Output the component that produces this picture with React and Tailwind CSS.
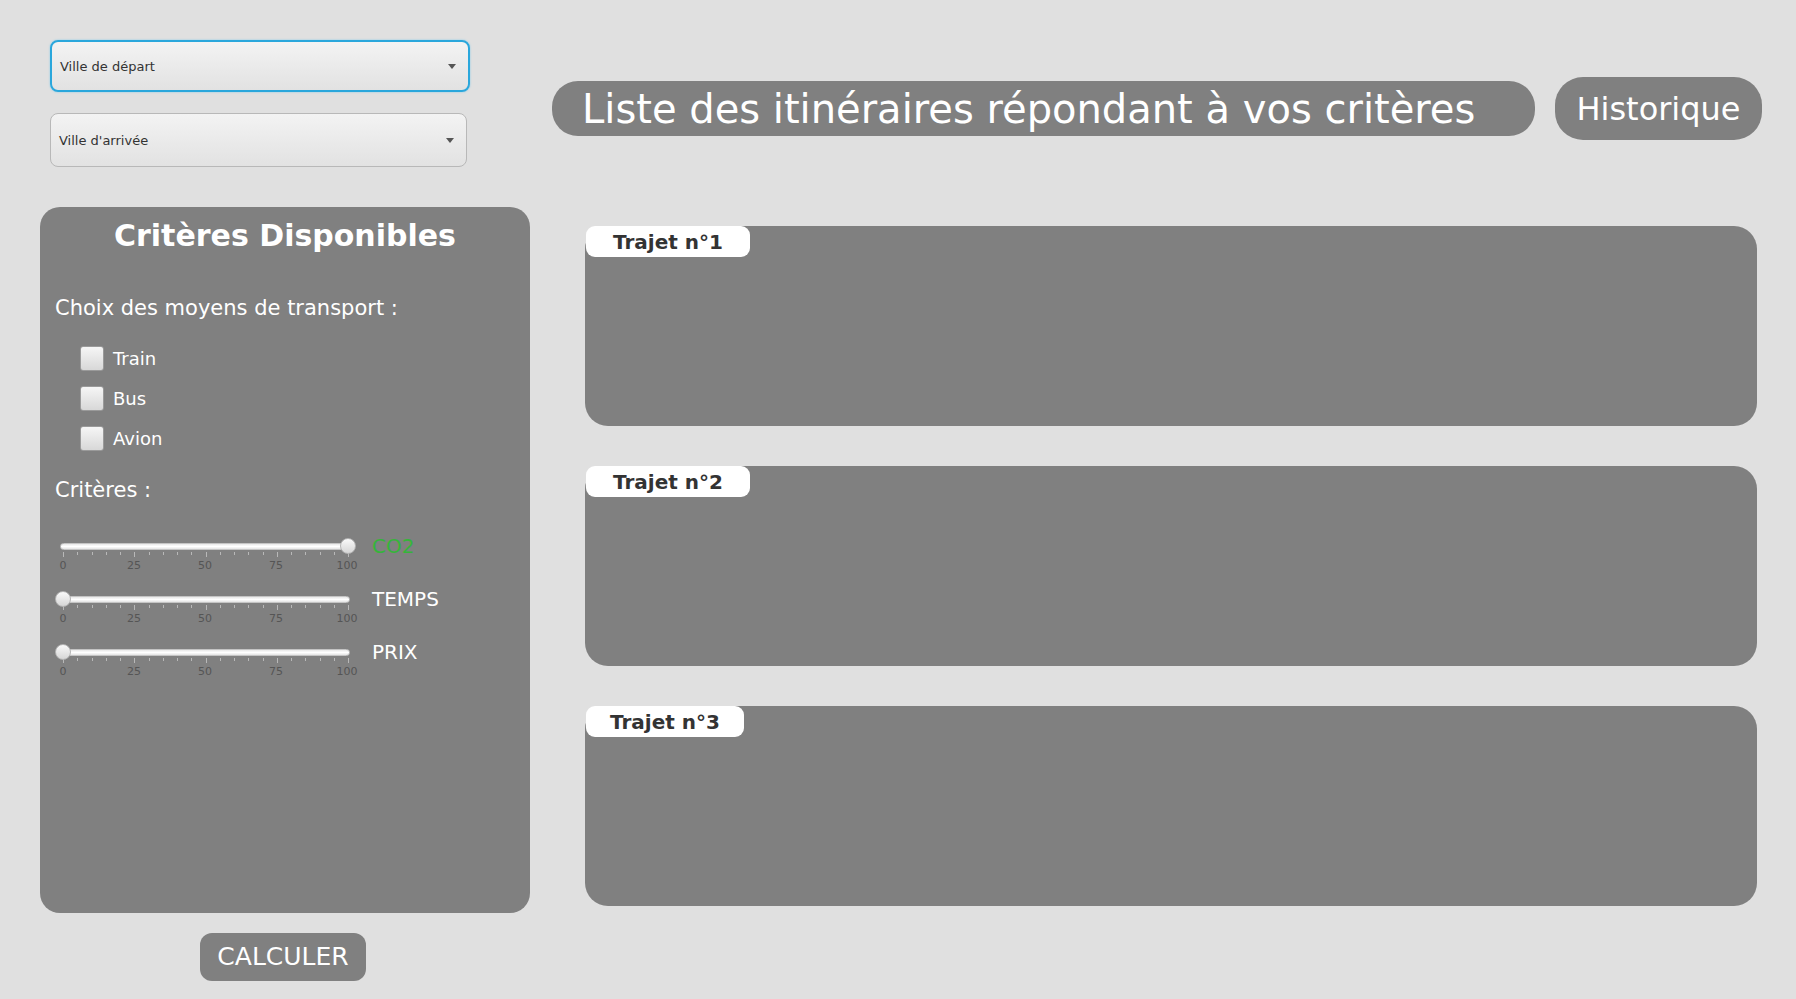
import React, { useState } from "react";

const font = { fontFamily: '"DejaVu Sans", "Liberation Sans", sans-serif' };

function Combo({ label, focused }) {
  return (
    <div
      className={
        "flex items-center justify-between pl-[8px] pr-[12px] pt-[1px] rounded-[8px] bg-gradient-to-b from-[#f3f3f3] to-[#e2e2e2] " +
        (focused
          ? "border-[2px] border-[#2aa7dc] shadow-[0_0_2px_#7cc8ea]"
          : "border border-[#b8b8b8]")
      }
      style={{ height: "100%" }}
    >
      <span className="text-[13px] text-[#333]">{label}</span>
      <span className="w-0 h-0 border-l-[4px] border-r-[4px] border-t-[5px] border-l-transparent border-r-transparent border-t-[#555]" />
    </div>
  );
}

function Check({ label }) {
  const [on, setOn] = useState(false);
  return (
    <div className="h-[40px] flex items-center pl-[25px] gap-[9px]" onClick={() => setOn(!on)}>
      <div className="w-[24px] h-[25px] rounded-[3px] border border-[#9a9a9a] bg-gradient-to-b from-[#f6f6f6] to-[#d8d8d8] flex items-center justify-center text-[#333] text-[16px]">
        {on ? "✓" : ""}
      </div>
      <span className="text-[18px] text-white">{label}</span>
    </div>
  );
}

function Slider({ value, label, green }) {
  const ticks = Array.from({ length: 21 }, (_, i) => i);
  return (
    <div className="h-[53px] flex items-start">
      <div className="relative w-[290px] ml-[5px]">
        <div className="mt-[7px] h-[7px] rounded-full border border-[#c4c4c4] bg-gradient-to-b from-[#e8e8e8] via-white to-[#e4e4e4]" />
        <div
          className="absolute top-[2px] w-[16px] h-[16px] rounded-full border border-[#b4b4b4] bg-gradient-to-b from-[#fafafa] to-[#d6d6d6]"
          style={{ left: 3 + (value / 100) * 285 - 8 }}
        />
        <div className="mt-[2px] ml-[3px] w-[286px] flex justify-between items-start">
          {ticks.map((t) => (
            <div key={t} className={"w-px bg-[#b8b8b8] " + (t % 5 === 0 ? "h-[5px]" : "h-[3px]")} />
          ))}
        </div>
        <div className="ml-[-9px] w-[308px] flex justify-between mt-[2px]">
          {["0", "25", "50", "75", "100"].map((n) => (
            <span key={n} className="w-[24px] text-center text-[11px] leading-[13px] text-[#555]">
              {n}
            </span>
          ))}
        </div>
      </div>
      <span className={"ml-[22px] h-[20px] leading-[20px] text-[20px] " + (green ? "text-[#35b53a]" : "text-white")}>
        {label}
      </span>
    </div>
  );
}

function Card({ n, tabW }) {
  return (
    <div className="w-[1172px] h-[200px] rounded-[23px] bg-[#808080] ml-[33px]">
      <div
        className="h-[31px] bg-white rounded-[9px] ml-[1px] flex items-center justify-center text-[20px] font-bold text-[#333]"
        style={{ width: tabW }}
      >
        Trajet n°{n}
      </div>
    </div>
  );
}

export default function App() {
  return (
    <div className="w-full h-screen bg-[#e0e0e0] flex overflow-hidden" style={font}>
      <div className="w-[490px] ml-[40px] flex flex-col">
        <div className="mt-[40px] ml-[10px] w-[420px] h-[52px]">
          <Combo label="Ville de départ" focused />
        </div>
        <div className="mt-[21px] ml-[10px] w-[417px] h-[54px]">
          <Combo label="Ville d'arrivée" />
        </div>
        <div className="mt-[40px] h-[706px] rounded-[20px] bg-[#808080] pl-[15px] flex flex-col">
          <div className="h-[56px] flex items-center justify-center pr-[15px] text-[30px] font-bold text-white">
            Critères Disponibles
          </div>
          <div className="mt-[31px] h-[30px] flex items-center text-[21px] text-white">
            Choix des moyens de transport :
          </div>
          <div className="mt-[14px]">
            <Check label="Train" />
            <Check label="Bus" />
            <Check label="Avion" />
          </div>
          <div className="mt-[18px] h-[30px] flex items-center text-[21px] text-white">Critères :</div>
          <div className="mt-[30px]">
            <Slider value={100} label="CO2" green />
            <Slider value={0} label="TEMPS" />
            <Slider value={0} label="PRIX" />
          </div>
        </div>
        <div className="mt-[20px] flex justify-center pr-[4px]">
          <button className="w-[166px] h-[48px] rounded-[12px] bg-[#808080] text-white text-[25px]">
            CALCULER
          </button>
        </div>
      </div>

      <div className="ml-[22px] flex flex-col">
        <div className="mt-[77px] flex items-center gap-[20px]">
          <div className="w-[983px] h-[55px] rounded-[26px] bg-[#808080] pl-[30px] flex items-center text-[40px] text-white">
            Liste des itinéraires répondant à vos critères
          </div>
          <button className="w-[207px] h-[63px] rounded-[28px] bg-[#808080] text-white text-[32px]">
            Historique
          </button>
        </div>
        <div className="mt-[86px] flex flex-col gap-[40px]">
          <Card n={1} tabW={164} />
          <Card n={2} tabW={164} />
          <Card n={3} tabW={158} />
        </div>
      </div>
    </div>
  );
}
